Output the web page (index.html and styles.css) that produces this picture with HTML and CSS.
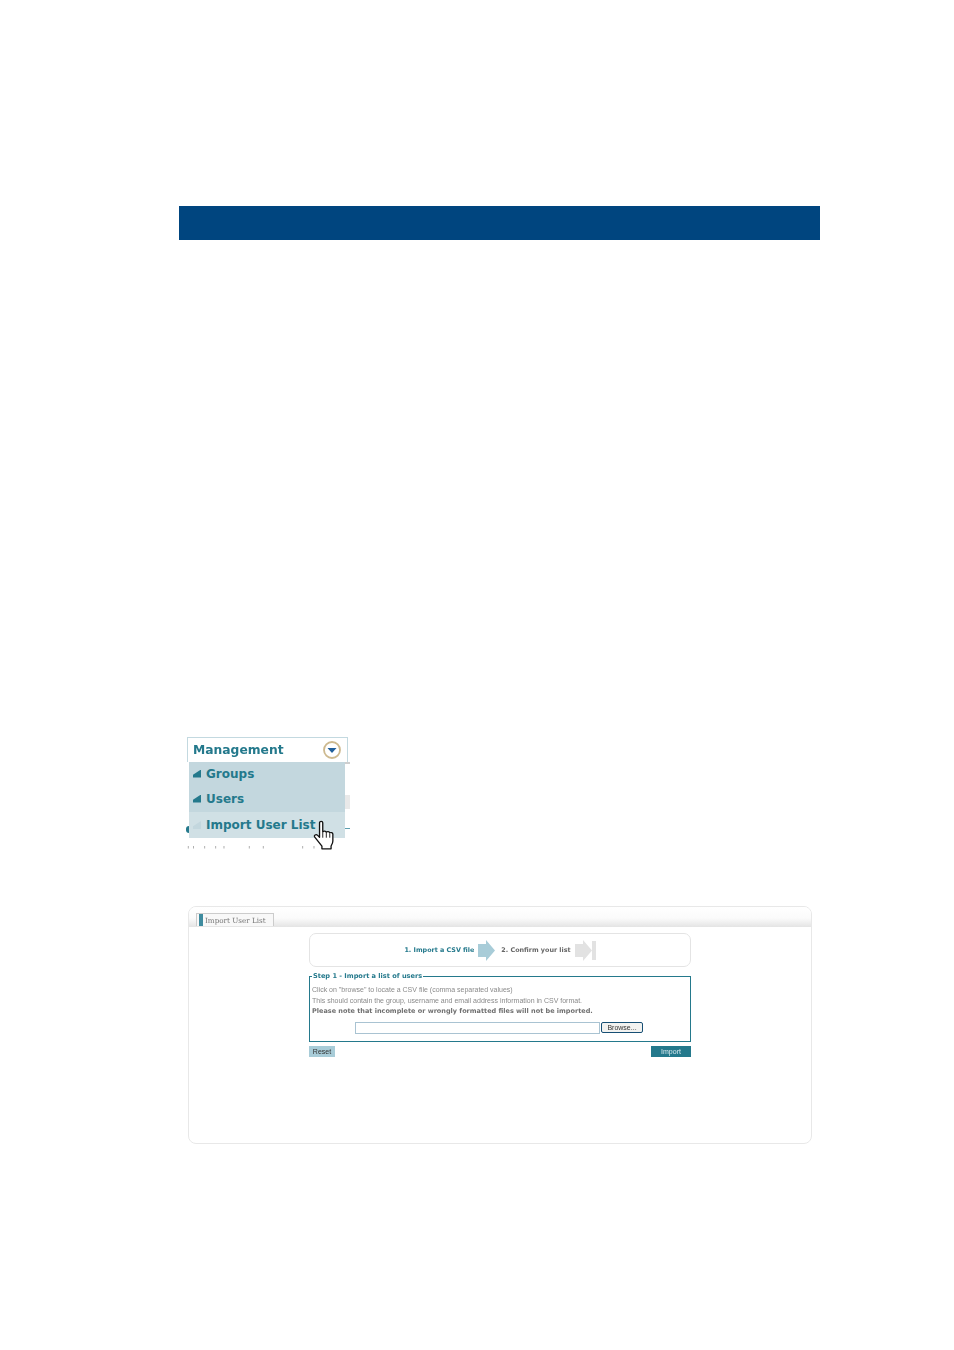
FILE: index.html
```html
<!DOCTYPE html>
<html lang="en">
<head>
<meta charset="utf-8">
<title>Import User List</title>
<link rel="stylesheet" href="styles.css">
</head>
<body>
<main class="page">
  <div class="banner"></div>

  <figure class="menu-shot">
    <div class="menu-head">
      <span>Management</span>
      <svg class="menu-toggle" width="20" height="20" viewBox="0 0 20 20"><circle cx="10" cy="10" r="8" fill="#fff" stroke="#cdb98f" stroke-width="1.8"/><path d="M5.5 8h9L10 13z" fill="#1f5f9c"/></svg>
    </div>
    <ul class="menu-list">
      <li class="menu-item"><i class="tri"></i>Groups</li>
      <li class="menu-item"><i class="tri"></i>Users</li>
      <li class="menu-item active"><i class="tri"></i>Import User List</li>
    </ul>
    <div class="frag frag-grey"></div>
    <div class="frag frag-band"></div>
    <div class="frag frag-teal"></div>
    <div class="frag frag-dot"></div>
    <div class="frag-text">' '   '   '  '        '    '             '   '    '</div>
    <svg class="hand" width="22" height="31" viewBox="1 0 18.500 28" preserveAspectRatio="none"><path d="M6.500 2.500c0-1.600 2.700-1.600 2.700 0v8.200c.9-1.100 2.600-.8 3 .3.8-.9 2.500-.6 2.900.6 1-.7 2.500-.1 2.600 1.200v6.200c0 1.900-.7 3-1.500 4.500v2.500H8.500v-2.500L2.500 15.500c-1-1.600 1-3 2.400-1.600l1.600 1.700z" fill="#fff" stroke="#111" stroke-width="1.100" stroke-linejoin="round"/><path d="M9.200 11v5M12.200 11v5M15.100 12v4" stroke="#111" stroke-width=".8" fill="none"/></svg>
  </figure>

  <section class="panel">
    <div class="tabbar">
      <div class="tab"><i class="tab-mark"></i>Import User List</div>
    </div>
    <div class="content">
      <div class="steps">
        <span class="step-on">1. Import a CSV file</span>
        <svg class="arrow-on" width="17" height="21" viewBox="0 0 17 21"><path d="M0 4h8V0l9 10.500L8 21v-4H0z" fill="#a8ccd8"/></svg>
        <span class="step-off">2. Confirm your list</span>
        <svg width="21" height="21" viewBox="0 0 21 21"><path d="M0 4h8V0l9 10.500L8 21v-4H0z" fill="#e2e2e2"/><rect x="17" y="1" width="4" height="19" fill="#e2e2e2"/></svg>
      </div>
      <fieldset class="box">
        <legend>Step 1 - Import a list of users</legend>
        <p>Click on "browse" to locate a CSV file (comma separated values)</p>
        <p>This should contain the group, username and email address information in CSV format.</p>
        <p class="strong">Please note that incomplete or wrongly formatted files will not be imported.</p>
        <div class="file-row">
          <div class="file-input"></div>
          <button class="browse" type="button">Browse...</button>
        </div>
      </fieldset>
      <div class="actions">
        <button class="btn btn-reset" type="button">Reset</button>
        <button class="btn btn-import" type="button">Import</button>
      </div>
    </div>
  </section>
</main>
</body>
</html>
```
FILE: styles.css
```css
* { box-sizing: border-box; }
html, body { margin: 0; padding: 0; background: #fff; }
body { font-family: "DejaVu Sans", sans-serif; height: 1350px; overflow: hidden; }
.page { padding-top: 206px; padding-left: 179px; width: 954px; }
.banner { width: 641px; height: 34px; background: #00457f; }

.menu-shot { position: relative; margin: 497px 0 0 8px; width: 163px; height: 115px; filter: blur(.3px); }
.menu-head {
  width: 161px; height: 25px; padding: 0 6px 1px 5px;
  display: flex; align-items: center; justify-content: space-between;
  border: 1px solid #c3d9e0; border-bottom: 0;
  color: #24798c; font-weight: 700; font-size: 12.300px;
}
.menu-toggle { margin-right: -1px; margin-bottom: -1px; }
.menu-list {
  list-style: none; margin: 0 0 0 2px; padding: 0; width: 156px; height: 76px;
  background: #c3d7de; position: relative; z-index: 1;
}
.menu-item {
  height: 25px; display: flex; align-items: center; gap: 5px; padding: 0 0 2px 4px;
  color: #24798c; font-weight: 700; font-size: 12px; white-space: nowrap;
}
.menu-item.active { background: #d0e0e5; height: 26px; padding-bottom: 0; }
.tri { width: 8px; height: 8px; background: #24798c; clip-path: polygon(100% 0, 100% 100%, 0 100%, 0 65%); }
.active .tri { background: #c3d7de; }
.frag { position: absolute; }
.frag-grey { left: 2px; top: 25px; width: 161px; height: 2px; background: #cfcfcf; }
.frag-band { left: 156px; top: 58px; width: 7px; height: 14px; background: #e9e9e9; }
.frag-teal { left: 156px; top: 91px; width: 7px; height: 1px; background: #5d9fb0; }
.frag-dot { left: -1px; top: 89px; width: 4px; height: 7px; background: #24798c; border-radius: 3px 0 0 3px; }
.frag-text { position: absolute; left: 0; top: 109px; font-size: 9px; line-height: 9px; color: #999; white-space: pre; }
.hand { position: absolute; left: 126px; top: 83px; z-index: 2; }

.panel {
  margin: 54px 0 0 9px; width: 624px; height: 238px;
  border: 1px solid #e8e8e8; border-radius: 8px; overflow: hidden; filter: blur(.25px);
}
.tabbar {
  height: 20px; padding: 6px 0 0 7px;
  background: linear-gradient(#fff, #fbfbfb 55%, #e4e4e4);
}
.tab {
  width: 78px; height: 13px; display: flex; align-items: center; gap: 2px;
  background: #f8f8f8; border: 1px solid #ccc; border-bottom: 0;
  font-family: "DejaVu Serif", serif; font-size: 7.200px; color: #777; white-space: nowrap;
}
.tab-mark { width: 4px; height: 12px; background: #3f8c9f; margin-left: 2px; }
.content { width: 382px; margin: 6px 0 0 120px; }
.steps {
  height: 34px; border: 1px solid #e4e4e4; border-radius: 7px;
  display: flex; align-items: center; justify-content: center; gap: 4px;
  font-size: 6.400px; font-weight: 700; font-family: "DejaVu Sans", sans-serif;
}
.arrow-on { margin-right: 2px; }
.step-on { color: #24798c; }
.step-off { color: #666; }
.box {
  margin: 5px 0 0; padding: 0 2px 0; height: 70px; min-width: 0;
  border: 1px solid #24798c;
  font-family: "Liberation Sans", sans-serif; font-size: 7px; color: #8a8a8a;
}
.box legend {
  padding: 0 1px; margin-left: 0; font-family: "DejaVu Sans", sans-serif;
  font-size: 6.600px; font-weight: 700; color: #24798c; line-height: 8px;
}
.box p { margin: 0; height: 10.500px; line-height: 10.500px; white-space: nowrap; }
.box p:first-of-type { margin-top: 5px; }
.box .strong { font-family: "DejaVu Sans", sans-serif; font-size: 6.500px; font-weight: 700; color: #707070; }
.file-row { display: flex; align-items: center; gap: 1px; margin: 5px 0 0 43px; }
.file-input { width: 245px; height: 12px; border: 1px solid #a9c3d2; background: #fff; }
.browse {
  width: 42px; height: 11px; padding: 0; font-family: "Liberation Sans", sans-serif; font-size: 7px;
  color: #333; background: #f2f2f0; border: 1px solid #174f74; border-radius: 2px; line-height: 9px;
}
.actions { display: flex; justify-content: space-between; margin-top: 4px; }
.btn { height: 11px; padding: 0; border: 0; font-family: "Liberation Sans", sans-serif; font-size: 7px; line-height: 11px; }
.btn-reset { width: 26px; background: #a8ccd8; color: #333; }
.btn-import { width: 40px; background: #24798c; color: #d9e9ee; }
```
